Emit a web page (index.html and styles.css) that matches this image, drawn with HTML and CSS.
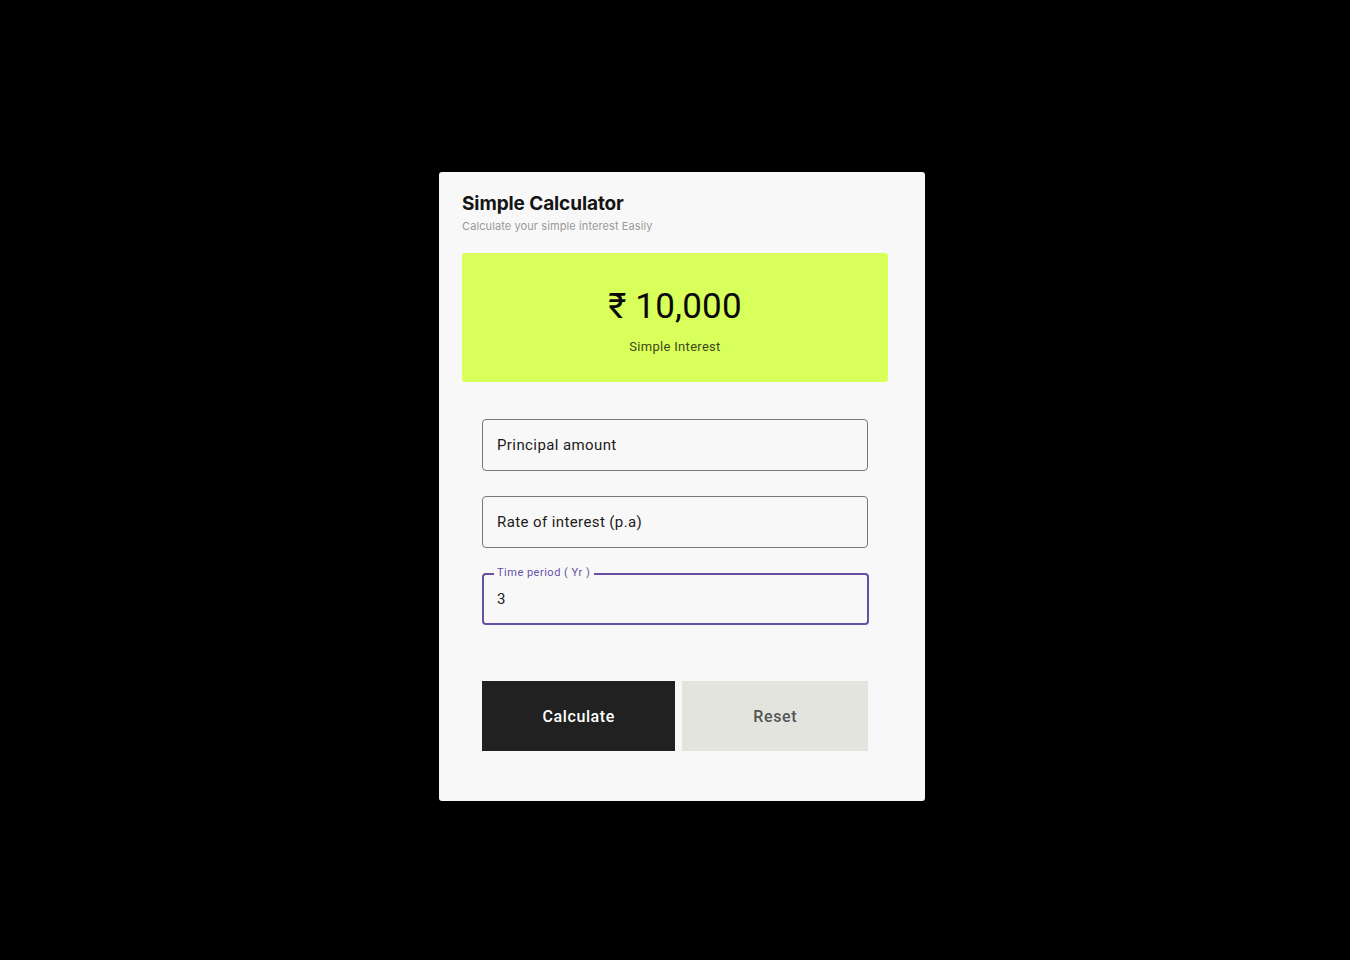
FILE: index.html
```html
<!DOCTYPE html>
<html>
<head>
<meta charset="utf-8">
<link rel="stylesheet" href="styles.css">
</head>
<body>
<div class="card">
  <h1 class="title">Simple Calculator</h1>
  <p class="subtitle">Calculate your simple interest Easily</p>
  <div class="result">
    <div class="amount">₹ 10,000</div>
    <div class="result-label">Simple Interest</div>
  </div>
  <form class="form">
    <div class="field"><span class="field-text">Principal amount</span></div>
    <div class="field"><span class="field-text">Rate of interest (p.a)</span></div>
    <div class="field field-active">
      <span class="field-label">Time period ( Yr )</span>
      <span class="field-text">3</span>
    </div>
    <div class="actions">
      <button type="button" class="btn btn-primary">Calculate</button>
      <button type="button" class="btn btn-secondary">Reset</button>
    </div>
  </form>
</div>
</body>
</html>
```
FILE: styles.css
```css
html, body {
  margin: 0;
  background: #000;
  height: 100%;
}
body {
  padding: 172px 0 0 439px;
  box-sizing: border-box;
  font-family: Roboto, "Liberation Sans", sans-serif;
}
.card {
  width: 486px;
  height: 629px;
  background: #f8f8f8;
  border-radius: 3px;
  box-sizing: border-box;
  padding: 21px 37px 0 23px;
}
.title {
  margin: 0;
  font-family: Inter, sans-serif;
  font-weight: 700;
  font-size: 19px;
  line-height: 22px;
  color: #141414;
  letter-spacing: -0.1px;
}
.subtitle {
  margin: 4px 0 0;
  font-family: Inter, sans-serif;
  font-size: 11px;
  line-height: 14px;
  color: #999;
  letter-spacing: 0.1px;
}
.result {
  margin-top: 20px;
  height: 129px;
  background: #d8ff5a;
  border-radius: 3px;
  display: flex;
  flex-direction: column;
  align-items: center;
  box-sizing: border-box;
  padding-top: 33px;
}
.amount {
  font-size: 35px;
  line-height: 42px;
  color: #0a0a0a;
  letter-spacing: 0.2px;
}
.result-label {
  margin-top: 11px;
  font-size: 13px;
  line-height: 16px;
  color: #3e4a1c;
  letter-spacing: 0.3px;
}
.form {
  padding: 37px 20px 0 20px;
  display: flex;
  flex-direction: column;
  gap: 25px;
}
.field {
  position: relative;
  height: 52px;
  width: 386px;
  box-sizing: border-box;
  border: 1px solid #7a777d;
  border-radius: 4px;
  display: flex;
  align-items: center;
  padding-left: 14px;
}
.field-text {
  font-size: 15px;
  color: #1d1b20;
  letter-spacing: 0.4px;
}
.field-active {
  width: 387px;
  border: 2px solid #6750a4;
  padding-left: 13px;
}
.field-label {
  position: absolute;
  top: -9px;
  left: 10px;
  padding: 0 4px 0 3px;
  background: #f8f8f8;
  font-size: 11px;
  line-height: 14px;
  color: #6750a4;
  letter-spacing: 0.5px;
}
.actions {
  margin-top: 31px;
  display: flex;
  gap: 7px;
}
.btn {
  height: 70px;
  border: none;
  border-radius: 0;
  font-family: Roboto, sans-serif;
  font-size: 16px;
  font-weight: 500;
  letter-spacing: 0.6px;
  cursor: pointer;
}
.btn-primary {
  width: 194px;
  background: #212121;
  color: #fff;
}
.btn-secondary {
  width: 186px;
  background: #e4e4de;
  color: #555;
}
```
